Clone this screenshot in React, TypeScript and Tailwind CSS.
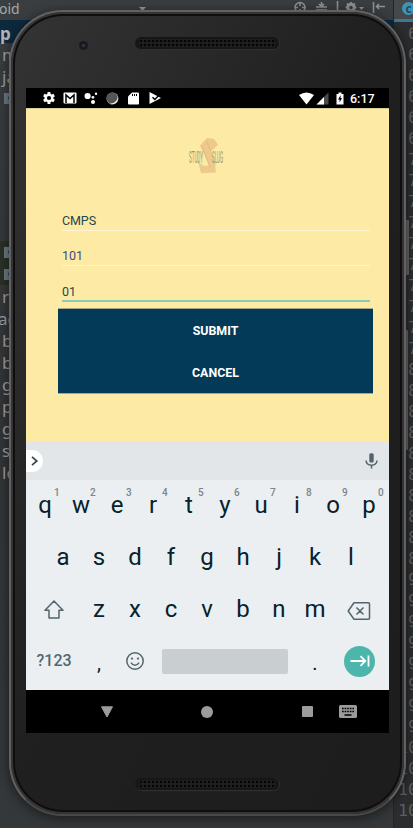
import React from "react";

const treeRows = [
  { t: "m", x: "pl-[2px]" },
  { t: "ja", x: "pl-[2px]" },
];
const lowerRows = [
  { t: "r", x: "pl-[2px]" },
  { t: "ac", x: "pl-0 -ml-[2px]" },
  { t: "b", x: "pl-[2px]" },
  { t: "b", x: "pl-[2px]" },
  { t: "g", x: "pl-[2px]" },
  { t: "p", x: "pl-[2px]" },
  { t: "g", x: "pl-[2px]" },
  { t: "s", x: "pl-[2px]" },
  { t: "lo", x: "pl-[2px]" },
];

const lineNumbers: string[] = [
  ...Array.from({ length: 6 }, (_, i) => String(64 + i)),
  ...Array.from({ length: 10 }, (_, i) => String(70 + i)),
  ...Array.from({ length: 10 }, (_, i) => String(80 + i)),
  ...Array.from({ length: 8 }, (_, i) => String(90 + i)),
  ...Array.from({ length: 4 }, (_, i) => String(100 + i)),
];

function FolderIcon() {
  return (
    <div className="flex h-[22px] items-center pl-1">
      <div className="flex h-[11px] w-[12px] items-center justify-center bg-[#6d7b83]">
        <div className="size-1 rounded-full bg-[#2c363b]" />
      </div>
    </div>
  );
}

function Ide() {
  return (
    <div className="flex h-full w-full bg-[#313335] text-[17px] text-[#9a9da0]">
      <div className="flex w-[393px] flex-col bg-linear-to-b from-[#3a3e40] via-[#323436] to-[#34383a]">
        <div className="flex h-5 items-start">
          <span className="-ml-px w-[140px] text-[14px] leading-[17px] text-[#a3a6a8]">oid</span>
          <svg className="mt-[7px]" width="7" height="4" viewBox="0 0 7 4" fill="#999">
            <path d="M0 0h7L3.5 4z" />
          </svg>
          <svg className="ml-[148px] mt-[1px]" width="98" height="14" viewBox="0 0 98 14" fill="none" stroke="#8d9194" strokeWidth="1.6">
            <circle cx="6" cy="6.5" r="5" />
            <path d="M6 1v4M6 8v4M1 6.5h3M8 6.5h4M22 6h11M22 9h11M27.500 1v4M25 3l2.500 2.500L30 3M43.500 0v12" />
            <circle cx="57" cy="6.500" r="3.300" strokeWidth="3" />
            <path d="M57 1v2M57 10v2M51.500 6.500h2M60.500 6.500h2M53 2.500l1.500 1.500M61 2.500l-1.500 1.500M53 10.500l1.500-1.500M61 10.500l-1.500-1.500" />
            <path d="M65 6h5l-2.500 3z" fill="#8d9194" stroke="none" />
            <path d="M79.500 1v11M82 5.500h9M85 3l-2.500 2.500L85 8" />
          </svg>
        </div>
        <div className="h-[23px] bg-[#0d293e] font-bold leading-[27px] text-[#b3b5b6]">p</div>
        {treeRows.map((r) => (
          <div key={r.t} className={`h-[22px] leading-[24px] ${r.x}`}>{r.t}</div>
        ))}
        <FolderIcon />
        <div className="h-[132px]" />
        <div className="bg-[#293128]">
          <FolderIcon />
          <FolderIcon />
        </div>
        {lowerRows.map((r, i) => (
          <div key={i} className={`h-[22px] leading-[23px] ${r.x}`}>{r.t}</div>
        ))}
      </div>
      <div className="flex w-5 flex-col overflow-hidden border-l border-[#242628] bg-[#2b2d2f]">
        <div className="flex h-[22px] shrink-0 items-start border-b-[3px] border-[#3f7894] bg-[#46494b] pl-2 pt-[2px]">
          <div className="flex size-[13px] shrink-0 items-center justify-center rounded-full bg-[#3e94b6] text-[12px] font-bold leading-none text-[#294854]">c</div>
        </div>
        <div className="flex flex-col pt-px font-['DejaVu_Sans_Mono',monospace] text-[16.600px] text-[#5b5f62]">
          {lineNumbers.map((n) => (
            <div key={n} className={n.length > 2 ? "h-[21px] pl-[4px] leading-[21px]" : "h-[21px] pl-[14px] leading-[21px]"}>{n}</div>
          ))}
        </div>
      </div>
    </div>
  );
}

function Grille() {
  return (
    <div className="h-[13px] w-[145px] rounded-full border-b border-r border-[#303030] bg-[#161616] px-1 py-[2px]">
      <div className="h-full w-full bg-[radial-gradient(circle,#050505_35%,#202020_60%)] bg-[size:4px_4px]" />
    </div>
  );
}

function StatusBar() {
  return (
    <div className="flex h-5 shrink-0 items-center bg-black pl-4 pr-[14px] text-white">
      <svg width="14" height="14" viewBox="0 0 24 24" fill="#fff">
        <path d="M19.400 13a7.800 7.800 0 0 0 0-2l2.600-2-2.500-4.200-3 1.200-1.700-1-.5-3.200H9.600L9.100 5 7.400 6l-3-1.200L2 9l2.500 2a7.800 7.800 0 0 0 0 2L2 15l2.400 4.200 3-1.200 1.700 1 .5 3.200h4.700l.5-3.200 1.700-1 3 1.200L22 15zM12 15.600a3.600 3.600 0 1 1 0-7.200 3.600 3.600 0 0 1 0 7.200z" />
      </svg>
      <svg className="ml-[7px]" width="14" height="12" viewBox="0 0 14 12">
        <rect x=".5" y=".5" width="13" height="11" rx="1" fill="#fff" />
        <path d="M3 11V3l4 3.500L11 3v8" fill="none" stroke="#000" strokeWidth="1.500" />
      </svg>
      <svg className="ml-[7px]" width="14" height="12" viewBox="0 0 14 12" fill="#fff">
        <circle cx="3.600" cy="4" r="3.100" /><circle cx="8.900" cy="5.300" r="1.400" /><circle cx="12" cy="1.800" r="1.200" /><circle cx="9" cy="10" r="2" />
      </svg>
      <svg className="ml-[8px]" width="13" height="13" viewBox="0 0 13 13">
        <circle cx="6.500" cy="6.500" r="6" fill="#aaa" /><circle cx="6" cy="6" r="5.500" fill="#555" />
        <path d="M4 12a6.300 6.300 0 0 0 8-7c-.5 3-3 6-8 7z" fill="#eee" />
      </svg>
      <svg className="ml-[9px]" width="11" height="13" viewBox="0 0 11 13">
        <path d="M4 .5h6q1 0 1 1v10q0 1-1 1H1q-1 0-1-1V4.500z" fill="#fff" />
        <path d="M4.500 2v2M6.500 2v2M8.500 2v2" stroke="#000" />
      </svg>
      <svg className="ml-[10px]" width="12" height="12" viewBox="0 0 12 12">
        <path d="M.5 0L12 6 .5 12z" fill="#fff" />
        <path d="M3.500 5.200l2.300 2.300L10.700 2.500" fill="none" stroke="#000" strokeWidth="1.500" />
      </svg>
      <div className="grow" />
      <svg width="31" height="13" viewBox="0 0 31 13">
        <path d="M0 3Q7.500-2 15 3L7.500 12.500z" fill="#fff" />
        <path d="M29.500.5v12h-12z" fill="#4b4b4b" /><path d="M25 5v7.500h-7.500z" fill="#fff" />
      </svg>
      <svg className="ml-[6px]" width="8" height="13" viewBox="0 0 8 13">
        <path d="M2.500.5h3V2H7.500v10.500H.5V2h2z" fill="#fff" /><path d="M4.700 3L2 7.500h1.600v3L6 6H4.500z" fill="#000" />
      </svg>
      <span className="ml-[6px] w-[25px] pt-px text-[12.500px] font-medium leading-5">6:17</span>
    </div>
  );
}

function Logo() {
  return (
    <svg className="ml-[161px] mt-[26px] shrink-0" width="40" height="44" viewBox="0 0 40 44">
      <path d="M13 10.500L20 3l7 .8 4 6L24.500 16l-1.300-.5L28 29l1 8.500-15 .8L10.500 24.500Q15 33.500 22 30z" fill="#edc98b" />
      <path d="M15 11l8 21M19.500 6l4 9.500L28 30" fill="none" stroke="#e6bb80" strokeWidth="1" />
      <text x="2" y="28" fontFamily="Roboto, sans-serif" fontSize="16" fill="#8b9c78" textLength="14" lengthAdjust="spacingAndGlyphs">STUDY</text>
      <text x="25" y="28" fontFamily="Roboto, sans-serif" fontSize="16" fill="#8b9c78" textLength="11" lengthAdjust="spacingAndGlyphs">SLUG</text>
    </svg>
  );
}

function CourseForm() {
  return (
    <div className="flex h-[333px] shrink-0 flex-col border-t border-[#d9cd96] bg-[#fdeaa4]">
      <Logo />
      <div className="ml-9 mt-[31px] w-[308px] text-[12.500px] text-[#27464f]">
        <div className="-ml-px h-[21px] border-b border-[#fff4d3] pl-px leading-[21px] tracking-[-0.1px]">CMPS</div>
        <div className="mt-[14px] h-[21px] border-b border-[#fff4d3] leading-[21px] text-[#414b80]">101</div>
        <div className="mt-[15px] h-[21px] border-b-2 border-[#87cdb5] leading-[21px]">01</div>
      </div>
      <div className="ml-8 mt-[6px] flex h-[86px] w-[315px] flex-col border-y border-[#a9a788] bg-[#033a57] text-center text-[12.400px] font-bold text-white">
        <div className="h-[42px] leading-[44px]">SUBMIT</div>
        <div className="h-[42px] leading-[44px]">CANCEL</div>
      </div>
    </div>
  );
}

function Key({ c, n }: { c: string; n?: string }) {
  return (
    <div className="relative flex h-full w-9 shrink-0 items-center justify-center text-[24px]">
      {c}
      {n && <span className="absolute left-[27px] top-[7px] text-[10px] font-medium leading-[12px] text-[#7b858a]">{n}</span>}
    </div>
  );
}

function PunctuationKey({ c }: { c: string }) {
  return <div className="flex h-full w-9 shrink-0 items-center justify-center pt-[3px] text-[20px]">{c}</div>;
}

function Keyboard() {
  return (
    <div className="flex h-[249px] shrink-0 flex-col bg-[#ebeff2] text-[#06222c]">
      <div className="flex h-[39px] items-center justify-between bg-[#e2e6e9] pr-[11px]">
        <div className="flex h-[22px] w-[17px] items-center rounded-r-full bg-white pl-[5px]">
          <svg width="8" height="10" viewBox="0 0 8 10" fill="none" stroke="#37474f" strokeWidth="1.700"><path d="M1 .8L5.800 5 1 9.200" /></svg>
        </div>
        <svg width="13" height="16" viewBox="0 0 13 16" fill="none" stroke="#51646c" strokeWidth="1.500">
          <rect x="4.300" y=".3" width="4.400" height="9.200" rx="1.500" fill="#51646c" stroke="none" /><path d="M1 7.500q.5 4.700 5.500 4.700T12 7.500M6.500 12v3.500" />
        </svg>
      </div>
      <div className="flex h-[50px] pl-px">
        {"qwertyuiop".split("").map((c, i) => <Key key={c} c={c} n={String((i + 1) % 10)} />)}
      </div>
      <div className="flex h-[53px] pl-[19px]">
        {"asdfghjkl".split("").map((c) => <Key key={c} c={c} />)}
      </div>
      <div className="flex h-[52px] items-center pl-[18px]">
        <svg className="mr-[17px] mt-[2px] shrink-0" width="20" height="20" viewBox="0 0 20 20" fill="none" stroke="#53666e" strokeWidth="1.500" strokeLinejoin="round">
          <path d="M10 1L1 10.200h4V18h10v-7.800h4z" />
        </svg>
        {"zxcvbnm".split("").map((c) => <Key key={c} c={c} />)}
        <svg className="ml-[14px] mt-[3px] shrink-0" width="24" height="18" viewBox="0 0 24 18" fill="none" stroke="#53666e" strokeWidth="1.500" strokeLinejoin="round">
          <path d="M7 .8h14.500q1 0 1 1v14.400q0 1-1 1H7L1.200 9zM9.500 5.500l7 7M16.500 5.500l-7 7" />
        </svg>
      </div>
      <div className="flex h-[52px] items-center">
        <span className="w-[54px] pl-[10.500px] text-[16px] font-medium text-[#53666e]">?123</span>
        <div className="ml-px flex h-full"><PunctuationKey c="," /></div>
        <svg className="ml-[9px] shrink-0" width="18" height="18" viewBox="0 0 18 18" fill="none" stroke="#53666e" strokeWidth="1.500">
          <circle cx="9" cy="9" r="8.200" /><path d="M5 10.600q1.500 2.600 4 2.600t4-2.600" />
          <circle cx="6" cy="6.600" r="1.100" fill="#53666e" stroke="none" /><circle cx="12" cy="6.600" r="1.100" fill="#53666e" stroke="none" />
        </svg>
        <div className="ml-[18px] h-[25px] w-[126px] shrink-0 rounded-[2px] bg-[#c9ced1]" />
        <div className="ml-[9px] flex h-full"><PunctuationKey c="." /></div>
        <div className="ml-[11px] flex size-[31px] shrink-0 items-center justify-center rounded-full bg-[#4db6ac]">
          <svg width="20" height="12" viewBox="0 0 20 12" fill="none" stroke="#fff" strokeWidth="1.800"><path d="M.5 6H15M10.500 1.200L15.300 6l-4.800 4.800M18.500.5v11" /></svg>
        </div>
      </div>
    </div>
  );
}

function NavBar() {
  return (
    <div className="flex h-[43px] shrink-0 items-center bg-black pl-[74px]">
      <svg width="14" height="12" viewBox="0 0 14 12"><path d="M1.500.8h11L7 11z" fill="#9c9c9c" stroke="#9c9c9c" strokeLinejoin="round" /></svg>
      <div className="ml-[87px] size-3 rounded-full bg-[#9c9c9c]" />
      <div className="ml-[89px] size-[11px] rounded-[1px] bg-[#9c9c9c]" />
      <svg className="ml-[26px]" width="18" height="13" viewBox="0 0 18 13">
        <rect width="18" height="13" rx="1.500" fill="#9c9c9c" />
        <path d="M3 3.500h12M3 6.500h12" stroke="#000" strokeWidth="1.700" strokeDasharray="1.700 .9" /><path d="M5.500 10h7" stroke="#000" strokeWidth="1.500" />
      </svg>
    </div>
  );
}

export default function App() {
  return (
    <div className="relative h-[828px] w-[413px] overflow-hidden font-['Noto_Sans',sans-serif]">
      <Ide />
      <div className="absolute left-[405px] top-[220px] h-[55px] w-[4px] rounded-r-[1px] bg-[#626262]" />
      <div className="absolute left-[405px] top-[330px] h-[120px] w-[3px] rounded-r-[1px] bg-[#626262]" />
      <div className="absolute left-[9px] top-[10px] flex h-[806px] w-[397px] flex-col rounded-[54px] border-2 border-[#626262] border-b-[#484848] bg-linear-to-br from-[#353435] via-[#1f1f20] to-[#1d1d1d] font-['Roboto',sans-serif] shadow-[0_2px_12px_#0008,inset_0_0_0_2px_#353334,inset_0_0_0_4px_#0e0e0f]">
        <div className="flex h-[76px] shrink-0 pt-[25px]">
          <div className="ml-[64px] flex size-4 items-center justify-center rounded-full bg-[#302f30]">
            <div className="flex size-[9px] items-center justify-center rounded-full bg-[#1b1920]"><div className="size-[3px] rounded-full bg-[#48323f]" /></div>
          </div>
          <div className="ml-[44px]"><Grille /></div>
        </div>
        <div className="ml-[15px] flex h-[645px] w-[363px] shrink-0 flex-col overflow-hidden">
          <StatusBar />
          <CourseForm />
          <Keyboard />
          <NavBar />
        </div>
        <div className="ml-[124px] mt-[45px]"><Grille /></div>
      </div>
    </div>
  );
}
